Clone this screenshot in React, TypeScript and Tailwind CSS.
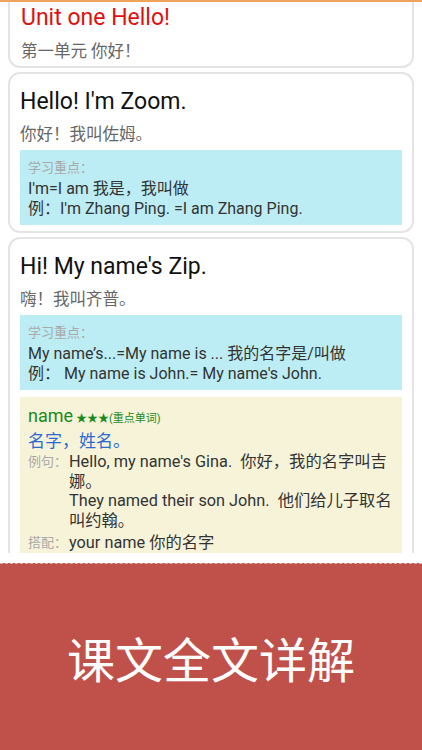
import React from "react";

const FONT = "font-['Roboto','Noto_Sans_CJK_SC',sans-serif]";

function KeyBox({ lines }: { lines: string[] }) {
  return (
    <div className="mt-[4px] bg-[#bdedf4] px-[8px] pt-[9px] pb-[7px]">
      <div className="text-[13px] leading-[18px] text-[#a9a9a9]">学习重点：</div>
      <div className="mt-[2px] text-[16px] leading-[19.5px] text-[#333]">
        {lines.map((l, i) => (
          <div key={i} className="whitespace-pre">
            {l}
          </div>
        ))}
      </div>
    </div>
  );
}

function Row({ label, lines, className = "" }: { label: string; lines: string[]; className?: string }) {
  return (
    <div className={"flex " + className}>
      <div className="w-[41px] shrink-0 whitespace-nowrap text-[13px] leading-[19.5px] text-[#aaaaaa]">{label}</div>
      <div className="text-[16.3px] leading-[19.5px] text-[#333]">
        {lines.map((l, i) => (
          <div key={i} className="whitespace-pre">
            {l}
          </div>
        ))}
      </div>
    </div>
  );
}

export default function App() {
  return (
    <div className={"w-[422px] h-[750px] bg-white flex flex-col overflow-hidden " + FONT}>
      <div className="h-[2px] bg-[#eea25c] shrink-0" />
      <div className="h-[551px] shrink-0 overflow-hidden px-[8px] flex flex-col gap-[4px]">
        {/* Card 1 */}
        <div className="border-2 border-t-0 border-[#e4e4e4] rounded-b-[12px] bg-white px-[11px] pt-[2px] pb-[3px]">
          <div className="text-[23px] leading-[28px] text-[#e01010]">Unit one Hello!</div>
          <div className="mt-[9px] text-[16.5px] leading-[22px] text-[#666]">第一单元 你好！</div>
        </div>

        {/* Card 2 */}
        <div className="border-2 border-[#e4e4e4] rounded-[12px] bg-white px-[10px] pt-[14px] pb-[6px]">
          <div className="text-[23px] leading-[28px] text-[#111]">Hello! I'm Zoom.</div>
          <div className="mt-[8px] text-[16.5px] leading-[22px] text-[#666]">你好！我叫佐姆。</div>
          <KeyBox lines={["I'm=I am 我是，我叫做", "例：I'm Zhang Ping. =I am Zhang Ping."]} />
        </div>

        {/* Card 3 */}
        <div className="border-2 border-[#e4e4e4] rounded-[12px] bg-white px-[10px] pt-[14px] pb-[6px]">
          <div className="text-[23px] leading-[28px] text-[#111]">Hi! My name's Zip.</div>
          <div className="mt-[8px] text-[16.5px] leading-[22px] text-[#666]">嗨！我叫齐普。</div>
          <KeyBox lines={["My name’s...=My name is ... 我的名字是/叫做", "例： My name is John.= My name's John."]} />
          <div className="mt-[7px] bg-[#f6f3d9] px-[8px] pt-[8px] pb-[10px]">
            <div className="leading-[22px] text-[#1a8a1a]">
              <span className="text-[18px]">name</span>
              <span className="text-[11px] ml-[3px]">★★★</span>
              <span className="text-[11px]">(重点单词)</span>
            </div>
            <div className="text-[17px] leading-[22px] text-[#2a6bd0]">名字，姓名。</div>
            <Row
              label="例句："
              lines={[
                "Hello, my name's Gina.  你好，我的名字叫吉",
                "娜。",
                "They named their son John.  他们给儿子取名",
                "叫约翰。",
              ]}
            />
            <Row className="mt-[3px]" label="搭配：" lines={["your name 你的名字", "her name 她的名字"]} />
          </div>
        </div>
      </div>
      <div className="h-[10px] shrink-0 bg-white" />
      <div className="flex-1 bg-[#c0514a] flex items-center justify-center border-t border-dashed border-[#d8b0ab]">
        <span className="text-[48px] leading-none text-white font-['Noto_Sans_CJK_SC',sans-serif]">
          课文全文详解
        </span>
      </div>
    </div>
  );
}
